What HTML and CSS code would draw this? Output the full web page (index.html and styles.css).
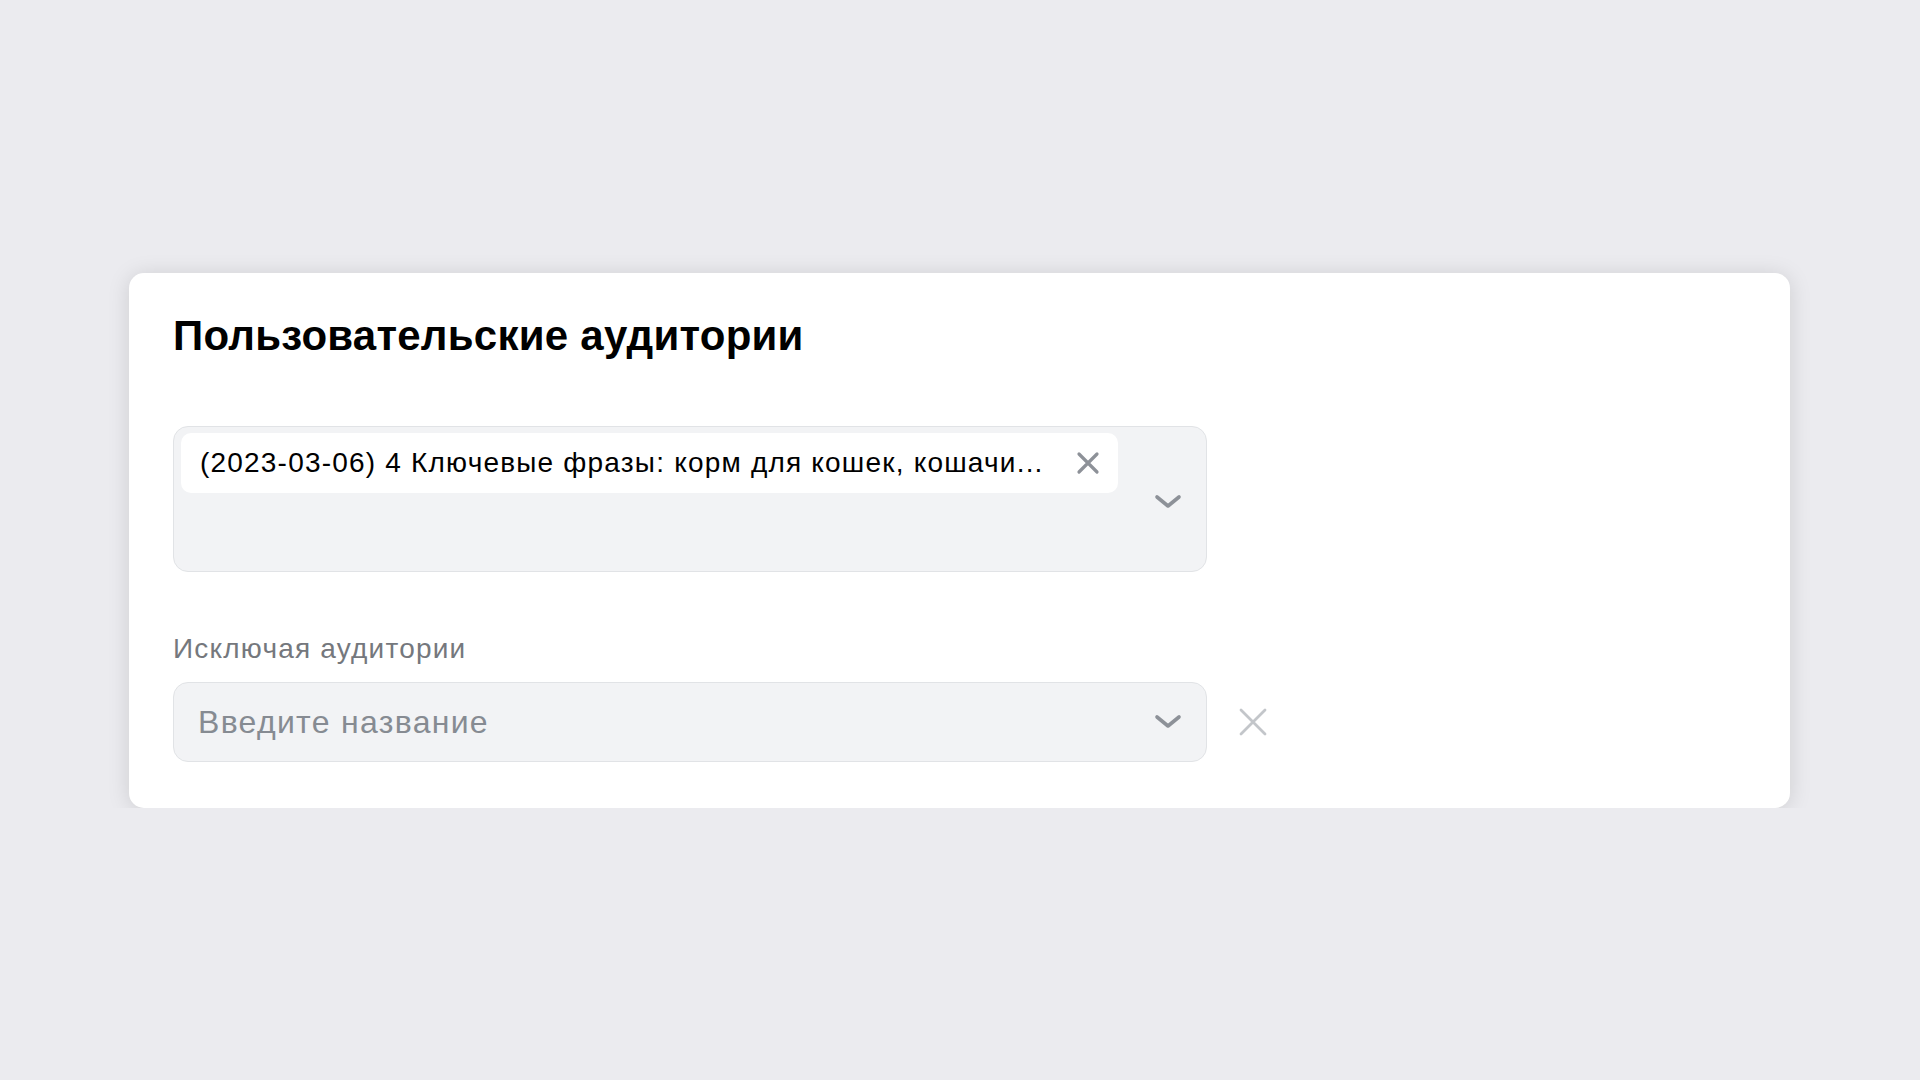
FILE: index.html
```html
<!DOCTYPE html>
<html>
<head>
    <title>Пользовательские аудитории</title>
    <link rel="stylesheet" href="styles.css">
</head>
<body>
    <div class="card">
        <h2 class="card-title">Пользовательские аудитории</h2>

        <div class="multi-select">
            <div class="chips">
                <div class="chip">
                    <span class="chip-text">(2023-03-06) 4 Ключевые фразы: корм для кошек, кошачи...</span>
                    <svg class="chip-remove" width="24" height="24" viewBox="0 0 24 24">
                        <path d="M3 3 L21 21 M21 3 L3 21" stroke="#8d9198" stroke-width="3.2" stroke-linecap="round" fill="none"/>
                    </svg>
                </div>
            </div>
            <svg class="chevron" width="28" height="16" viewBox="0 0 28 16">
                <path d="M3 3 L14 12 L25 3" stroke="#8d9198" stroke-width="3.6" stroke-linecap="round" stroke-linejoin="round" fill="none"/>
            </svg>
        </div>

        <label class="field-label">Исключая аудитории</label>
        <div class="field-row">
            <div class="single-select">
                <span class="placeholder">Введите название</span>
                <svg class="chevron" width="28" height="16" viewBox="0 0 28 16">
                    <path d="M3 3 L14 12 L25 3" stroke="#8d9198" stroke-width="3.6" stroke-linecap="round" stroke-linejoin="round" fill="none"/>
                </svg>
            </div>
            <svg class="row-remove" width="30" height="30" viewBox="0 0 30 30">
                <path d="M3 3 L27 27 M27 3 L3 27" stroke="#c3c6ca" stroke-width="2.8" stroke-linecap="round" fill="none"/>
            </svg>
        </div>
    </div>
</body>
</html>
```

FILE: styles.css
```css
body {
    font-family: 'Liberation Sans', Arial, sans-serif;
    margin: 0;
    padding: 273px 0 0 129px;
    background-color: #ebebef;
    color: #000;
}
.card {
    width: 1661px;
    height: 535px;
    box-sizing: border-box;
    padding: 38px 44px 0 44px;
    background-color: #fff;
    border-radius: 15px;
    box-shadow: 0 2px 22px rgba(0, 0, 0, 0.13);
}
.card-title {
    margin: 0;
    font-size: 42px;
    line-height: 50px;
    font-weight: bold;
    letter-spacing: 0.25px;
}
.multi-select {
    display: flex;
    align-items: center;
    margin-top: 65px;
    width: 1034px;
    height: 146px;
    box-sizing: border-box;
    padding: 6px 24px 0 7px;
    background-color: #f2f3f5;
    border: 1px solid #e1e3e6;
    border-radius: 15px;
}
.chips {
    flex: 1;
    align-self: flex-start;
}
.chip {
    display: flex;
    align-items: center;
    width: 937px;
    height: 60px;
    box-sizing: border-box;
    padding: 0 18px 0 19px;
    background-color: #fff;
    border-radius: 10px;
}
.chip-text {
    flex: 1;
    font-size: 28px;
    letter-spacing: 1.2px;
    white-space: nowrap;
}
.chevron {
    display: block;
}
.field-label {
    display: block;
    margin-top: 60px;
    font-size: 28px;
    line-height: 34px;
    letter-spacing: 1.2px;
    color: #75787d;
}
.field-row {
    display: flex;
    align-items: center;
    margin-top: 16px;
}
.single-select {
    display: flex;
    align-items: center;
    width: 1034px;
    height: 80px;
    box-sizing: border-box;
    padding: 0 24px 0 24px;
    background-color: #f2f3f5;
    border: 1px solid #e1e3e6;
    border-radius: 15px;
}
.placeholder {
    flex: 1;
    font-size: 32px;
    letter-spacing: 1.3px;
    color: #868b92;
}
.row-remove {
    display: block;
    margin-left: 31px;
}
```
